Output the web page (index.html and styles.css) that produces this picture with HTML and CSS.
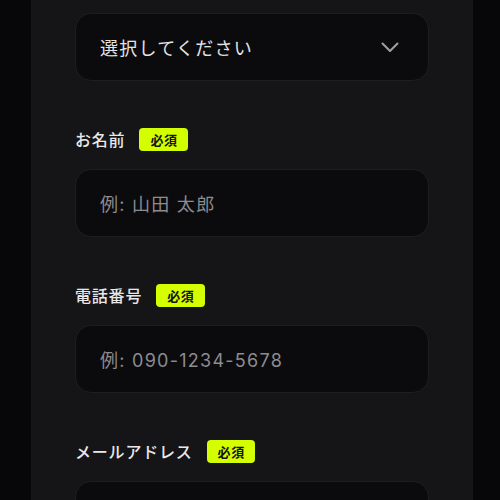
FILE: index.html
```html
<!DOCTYPE html>
<html lang="ja">
<head>
<meta charset="utf-8">
<link rel="stylesheet" href="styles.css">
</head>
<body>
<div class="page">
  <form class="panel">
    <div class="field">
      <div class="control select">
        <span class="value">選択してください</span>
        <svg class="chevron" width="20" height="20" viewBox="0 0 20 20" fill="none"><path d="M2.5 6.5 L10 14 L17.5 6.5" stroke="currentColor" stroke-width="2" stroke-linecap="round" stroke-linejoin="round"/></svg>
      </div>
    </div>
    <div class="field">
      <div class="label-row"><span class="label">お名前</span><span class="badge">必須</span></div>
      <div class="control"><span class="placeholder">例: 山田 太郎</span></div>
    </div>
    <div class="field">
      <div class="label-row"><span class="label">電話番号</span><span class="badge">必須</span></div>
      <div class="control"><span class="placeholder">例: 090-1234-5678</span></div>
    </div>
    <div class="field">
      <div class="label-row"><span class="label">メールアドレス</span><span class="badge">必須</span></div>
      <div class="control"></div>
    </div>
  </form>
</div>
</body>
</html>
```
FILE: styles.css
```css
html, body {
  margin: 0;
  padding: 0;
  background: #070709;
  height: 100%;
  overflow: hidden;
}
.page {
  padding-left: 31px;
  font-family: "Inter", "Noto Sans CJK JP", sans-serif;
}
.panel {
  width: 442px;
  box-sizing: border-box;
  background: #151517;
  padding: 13px 44px 40px;
  min-height: 600px;
  display: flex;
  flex-direction: column;
  gap: 47px;
}
.field {
  display: flex;
  flex-direction: column;
  gap: 18px;
}
.label-row {
  display: flex;
  align-items: center;
  gap: 14px;
  height: 23px;
}
.label {
  font-family: "Noto Sans CJK JP", sans-serif;
  font-size: 16px;
  font-weight: 500;
  letter-spacing: 0.05em;
  color: #e8e8ea;
  line-height: 1;
  padding-bottom: 2px;
}
.badge {
  font-family: "Noto Sans CJK JP", sans-serif;
  background: #d4ff00;
  color: #141414;
  font-size: 13px;
  font-weight: 700;
  letter-spacing: 0.05em;
  border-radius: 4px;
  height: 23px;
  padding: 0 10px 0 11px;
  display: flex;
  align-items: center;
  line-height: 1;
}
.control {
  height: 68px;
  box-sizing: border-box;
  border: 1px solid #1e1e21;
  background: #0b0b0d;
  border-radius: 16px;
  display: flex;
  align-items: center;
  padding: 0 24px;
  font-size: 18px;
  letter-spacing: 0.07em;
}
.select {
  justify-content: space-between;
  padding-right: 28px;
}
.value {
  color: #e4e4e6;
}
.placeholder {
  color: #8c8c91;
}
.chevron {
  color: #a0a0a4;
  display: block;
}
```
